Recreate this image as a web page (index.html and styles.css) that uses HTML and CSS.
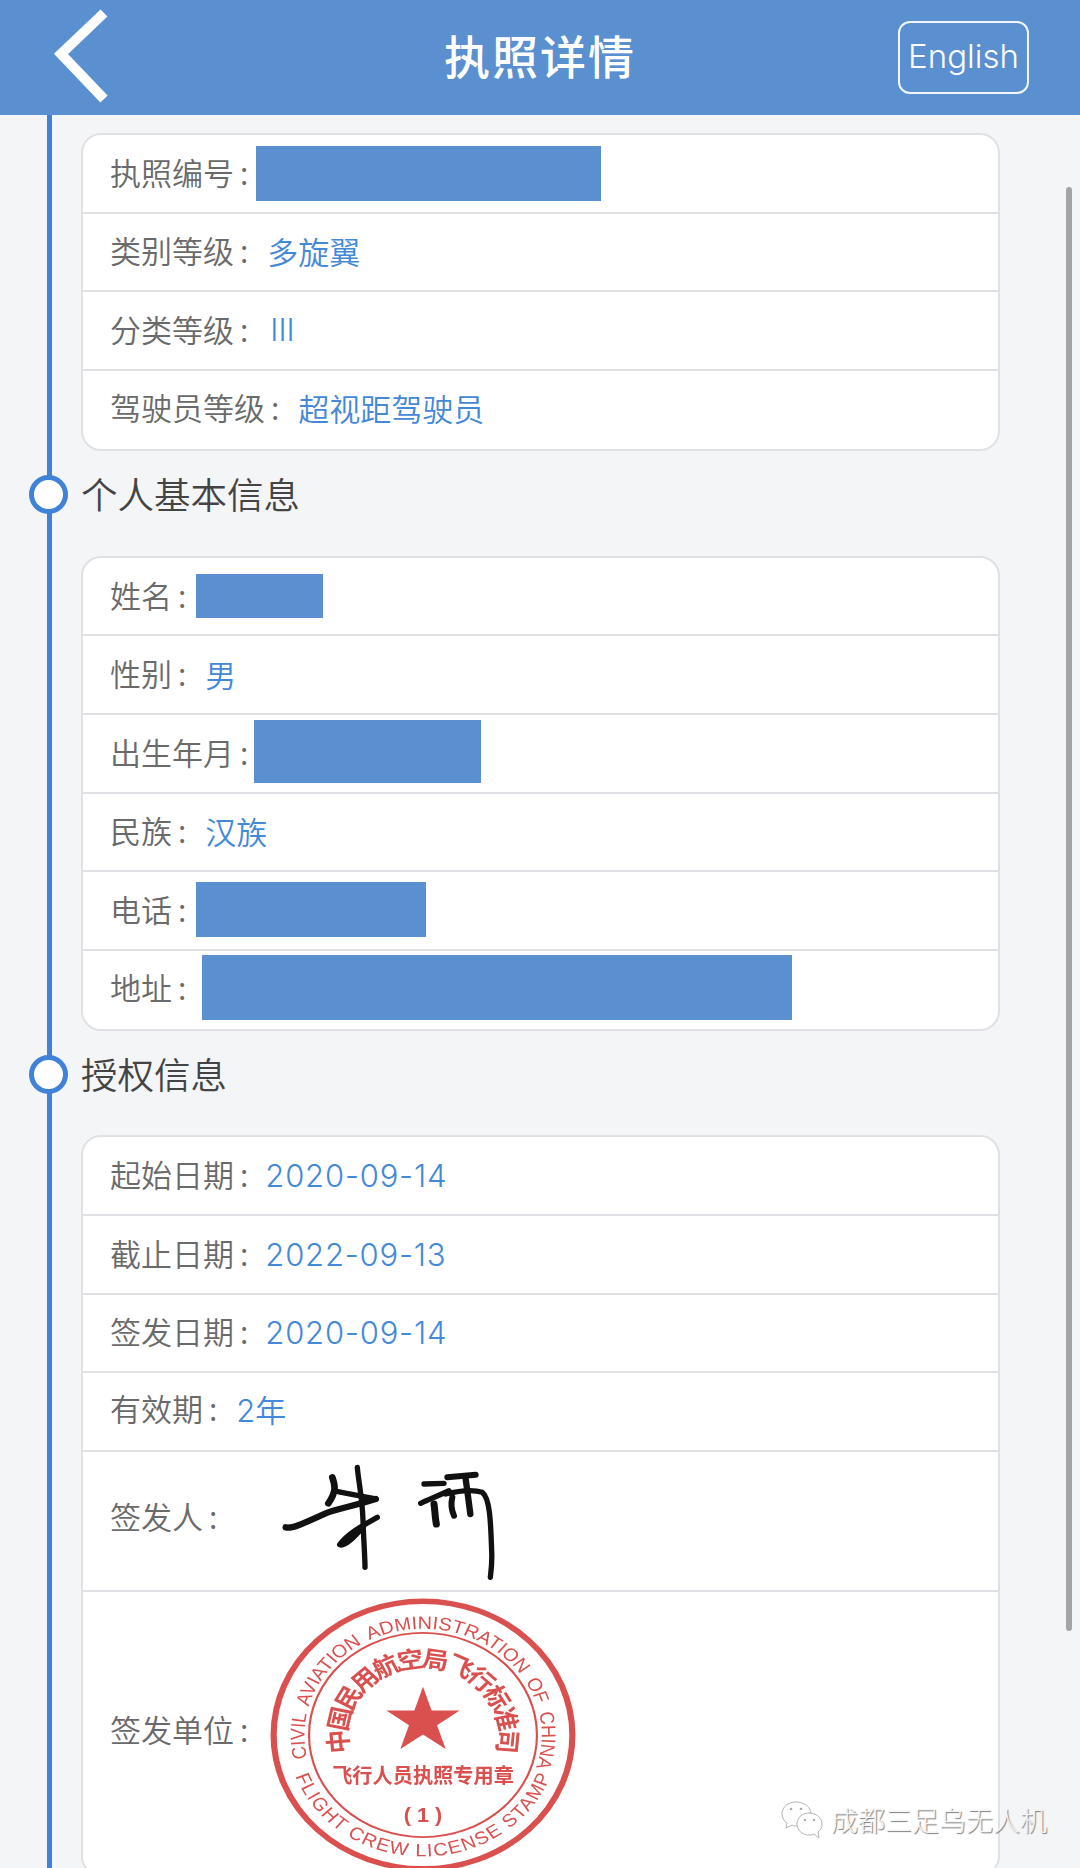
FILE: index.html
```html
<!DOCTYPE html>
<html lang="zh-CN">
<head>
<meta charset="utf-8">
<title>执照详情</title>
<link rel="stylesheet" href="styles.css">
</head>
<body>
<div class="page">
  <header class="header">
    <div class="header-left">
      <svg class="back" viewBox="0 0 60 100" aria-hidden="true"><polyline points="51,5 8,46 51,91" fill="none" stroke="#fff" stroke-width="10"/></svg>
    </div>
    <h1 class="title">执照详情</h1>
    <div class="header-right"><span class="lang">English</span></div>
  </header>
  <main class="content">
    <div class="timeline">
      <section class="card">
        <div class="row"><span class="label">执照编号<i class="colon">:</i></span><span class="mask mask-license"></span></div>
        <div class="row"><span class="label">类别等级<i class="colon">:</i></span><span class="value">多旋翼</span></div>
        <div class="row"><span class="label">分类等级<i class="colon">:</i></span><span class="value value-roman">III</span></div>
        <div class="row row-up"><span class="label">驾驶员等级<i class="colon">:</i></span><span class="value">超视距驾驶员</span></div>
      </section>
      <h2 class="heading"><span class="dot"></span><span class="heading-text">个人基本信息</span></h2>
      <section class="card">
        <div class="row"><span class="label">姓名<i class="colon">:</i></span><span class="mask mask-name"></span></div>
        <div class="row"><span class="label">性别<i class="colon">:</i></span><span class="value">男</span></div>
        <div class="row"><span class="label">出生年月<i class="colon">:</i></span><span class="mask mask-birth"></span></div>
        <div class="row"><span class="label">民族<i class="colon">:</i></span><span class="value">汉族</span></div>
        <div class="row"><span class="label">电话<i class="colon">:</i></span><span class="mask mask-phone"></span></div>
        <div class="row row-short row-up"><span class="label">地址<i class="colon">:</i></span><span class="mask mask-address"></span></div>
      </section>
      <h2 class="heading"><span class="dot"></span><span class="heading-text">授权信息</span></h2>
      <section class="card">
        <div class="row"><span class="label">起始日期<i class="colon">:</i></span><span class="value value-date">2020-09-14</span></div>
        <div class="row"><span class="label">截止日期<i class="colon">:</i></span><span class="value value-date">2022-09-13</span></div>
        <div class="row"><span class="label">签发日期<i class="colon">:</i></span><span class="value value-date">2020-09-14</span></div>
        <div class="row row-up"><span class="label">有效期<i class="colon">:</i></span><span class="value">2年</span></div>
        <div class="row row-sign">
          <span class="label label-tall">签发人<i class="colon">:</i></span>
          <svg class="signature" viewBox="0 0 720 390" aria-hidden="true">
            <g fill="none" stroke="#111" stroke-linecap="round" stroke-linejoin="round">
              <path d="M50 220 C70 225 110 205 170 178 C200 165 240 160 320 135" stroke-width="19"/>
              <path d="M190 70 C197 90 205 110 178 148" stroke-width="20"/>
              <path d="M203 112 C230 118 270 125 322 135" stroke-width="16"/>
              <path d="M265 40 C268 80 280 130 282 200 C284 260 288 310 288 340" stroke-width="16"/>
              <path d="M325 190 C290 210 240 235 212 272 C230 280 265 240 285 215" stroke-width="16"/>
              <path d="M465 90 L525 88" stroke-width="16"/>
              <path d="M455 148 C480 135 510 125 540 110" stroke-width="16"/>
              <path d="M495 150 C498 170 498 190 502 210" stroke-width="21"/>
              <path d="M535 70 L620 62" stroke-width="18"/>
              <path d="M590 75 C595 110 600 150 604 180" stroke-width="19"/>
              <path d="M550 130 C545 150 548 170 555 185" stroke-width="18"/>
              <path d="M530 120 C570 110 610 105 640 115 C665 135 665 220 668 290 C670 330 665 360 664 370" stroke-width="16"/>
            </g>
          </svg>
        </div>
        <div class="row row-stamp">
          <span class="label label-tall">签发单位<i class="colon">:</i></span>
          <svg class="stamp" viewBox="0 0 200 200" preserveAspectRatio="none" aria-hidden="true">
            <defs>
              <path id="arc-top" d="M100 177 A77 77 0 1 1 100.1 177" />
              <path id="arc-bottom" d="M12 100 A88 88 0 0 0 188 100" />
            </defs>
            <g fill="none" stroke="#d9504f">
              <circle cx="100" cy="100" r="97" stroke-width="4"/>
              <circle cx="100" cy="100" r="74" stroke-width="1.4"/>
            </g>
            <g class="stamp-text">
              <text class="stamp-en stamp-en-top"><textPath href="#arc-top" startOffset="21.5%">CIVIL AVIATION ADMINISTRATION OF CHINA</textPath></text>
              <text class="stamp-en stamp-en-bottom"><textPath href="#arc-bottom" startOffset="11%">FLIGHT CREW LICENSE STAMP</textPath></text>
              <g class="stamp-cn">
                <text class="ch-1" x="100" y="51" text-anchor="middle">中</text>
                <text class="ch-2" x="100" y="51" text-anchor="middle">国</text>
                <text class="ch-3" x="100" y="51" text-anchor="middle">民</text>
                <text class="ch-4" x="100" y="51" text-anchor="middle">用</text>
                <text class="ch-5" x="100" y="51" text-anchor="middle">航</text>
                <text class="ch-6" x="100" y="51" text-anchor="middle">空</text>
                <text class="ch-7" x="100" y="51" text-anchor="middle">局</text>
                <text class="ch-8" x="100" y="51" text-anchor="middle">飞</text>
                <text class="ch-9" x="100" y="51" text-anchor="middle">行</text>
                <text class="ch-10" x="100" y="51" text-anchor="middle">标</text>
                <text class="ch-11" x="100" y="51" text-anchor="middle">准</text>
                <text class="ch-12" x="100" y="51" text-anchor="middle">司</text>
              </g>
              <polygon points="100,65 105.6,82.3 123.8,82.3 109.1,93 114.7,110.2 100,99.6 85.3,110.2 90.9,93 76.2,82.3 94.4,82.3"/>
              <text class="stamp-line" x="100" y="135" text-anchor="middle" textLength="118" lengthAdjust="spacingAndGlyphs">飞行人员执照专用章</text>
              <text class="stamp-num" x="100" y="163" text-anchor="middle">( 1 )</text>
            </g>
          </svg>
        </div>
      </section>
    </div>
  </main>
  <div class="scrollbar"></div>
  <div class="watermark">
    <svg class="wechat" viewBox="0 0 42 38" aria-hidden="true">
      <g fill="#fff" stroke="#b5b5b5" stroke-width="1">
        <path d="M15 1 C7 1 1 6 1 13 C1 17 3 20 6 22 L5 27 L11 24 C13 25 15 25 17 25 C25 25 30 19 30 13 C30 6 23 1 15 1Z"/>
        <path d="M28 12 C21 12 16 17 16 23 C16 29 21 34 28 34 C30 34 31 34 33 33 L38 37 L37 31 C40 29 41 26 41 23 C41 17 35 12 28 12Z"/>
      </g>
      <g fill="#aaa"><circle cx="10" cy="8" r="1.3"/><circle cx="20" cy="8" r="1.3"/><circle cx="24" cy="19" r="1.2"/><circle cx="33" cy="19" r="1.2"/></g>
    </svg>
    <span class="watermark-text">成都三足乌无人机</span>
  </div>
</div>
</body>
</html>
```
FILE: styles.css
```css
* { box-sizing: border-box; }
html, body { margin: 0; padding: 0; }
body {
  width: 1080px;
  height: 1868px;
  overflow: hidden;
  font-family: "Noto Sans CJK SC", "Inter", sans-serif;
  background: #f4f5f7;
}
.page { position: relative; width: 1080px; height: 1868px; overflow: hidden; }

.header {
  height: 115px;
  background: #5a90d0;
  display: grid;
  grid-template-columns: 1fr auto 1fr;
  align-items: center;
}
.header-left { padding-left: 53px; display: flex; align-items: center; }
.back { width: 60px; height: 100px; display: block; }
.title {
  margin: 0 0 8px;
  font-size: 46px;
  font-weight: 500;
  color: #fff;
  line-height: 1;
  letter-spacing: 2px;
}
.header-right { display: flex; justify-content: flex-end; padding-right: 51px; }
.lang {
  width: 131px;
  height: 73px;
  border: 2px solid rgba(255, 255, 255, 0.92);
  border-radius: 12px;
  display: flex;
  align-items: center;
  justify-content: center;
  padding-bottom: 4px;
  color: #fff;
  font-family: "Inter", sans-serif;
  font-size: 33px;
  font-weight: 300;
}

.content { padding-left: 47px; }
.timeline {
  width: 960px;
  border-left: 5px solid #3f82d8;
  padding: 18px 0 0 29px;
  min-height: 1800px;
}
.card {
  width: 919px;
  background: #fff;
  border: 2px solid #e0e1e4;
  border-radius: 20px;
  overflow: hidden;
}
.row {
  height: 78.6px;
  border-bottom: 2px solid #e0e1e4;
  padding-left: 27px;
  display: flex;
  align-items: center;
  font-size: 31px;
}
.row:last-child { border-bottom: 0; }
.row-up { padding-bottom: 3px; }
.row-short { height: 78px; }
.row-sign { height: 140.5px; }
.row-stamp { height: 282px; }
.label { color: #6a6a6a; font-weight: 350; white-space: nowrap; margin-bottom: 4px; }
.label-tall { margin-bottom: 10px; }
.colon { font-style: normal; margin-left: 6px; }
.value {
  font-family: "Inter", "Noto Sans CJK SC", sans-serif;
  color: #4488d8;
  font-weight: 350;
  margin: 0 0 2px 19px;
  white-space: nowrap;
}
.value-roman { margin-left: 22px; font-weight: 300; }
.value-date { margin: 0 0 0 17px; letter-spacing: 0.8px; }

.mask { display: block; background: #5a90d0; flex: none; }
.mask-license { width: 345px; height: 55px; margin-left: 7.5px; }
.mask-name { width: 127px; height: 44px; margin-left: 9.7px; }
.mask-birth { width: 227px; height: 63px; margin: 0 0 4px 6px; }
.mask-phone { width: 230px; height: 55px; margin: 0 0 2px 9.7px; }
.mask-address { width: 590px; height: 65px; margin: 0 0 2px 16px; }

.heading {
  margin: 24px 0 41.5px -52px;
  height: 39px;
  display: flex;
  align-items: center;
  gap: 13px;
  font-size: 36.5px;
  font-weight: 350;
  color: #444;
  line-height: 1;
}
.heading-text { margin-bottom: 1px; }
.dot {
  width: 39px;
  height: 39px;
  border-radius: 50%;
  border: 5px solid #3f82d8;
  background: #fff;
  flex: none;
}

.signature { width: 240px; height: 130px; margin: 0 0 4px 52px; flex: none; filter: blur(0.5px); }
.stamp {
  width: 308px;
  height: 276px;
  margin: 5px 0 0 21px;
  flex: none;
  align-self: flex-start;
  filter: blur(0.4px);
}
.stamp-text { fill: #d9504f; }
.stamp-en { font-family: "Liberation Sans", sans-serif; font-size: 13px; }
.stamp-en-top { word-spacing: 2.5px; }
.stamp-en-bottom { letter-spacing: 0.8px; }
.stamp-cn { font-size: 17px; font-weight: 700; }
.stamp-line { font-size: 15px; font-weight: 700; }
.stamp-num { font-family: "Liberation Sans", sans-serif; font-size: 14px; font-weight: 700; }
.stamp-cn text { transform-origin: 100px 100px; }
.ch-1 { transform: rotate(-95deg); }
.ch-2 { transform: rotate(-77.7deg); }
.ch-3 { transform: rotate(-60.5deg); }
.ch-4 { transform: rotate(-43.2deg); }
.ch-5 { transform: rotate(-25.9deg); }
.ch-6 { transform: rotate(-8.6deg); }
.ch-7 { transform: rotate(8.6deg); }
.ch-8 { transform: rotate(25.9deg); }
.ch-9 { transform: rotate(43.2deg); }
.ch-10 { transform: rotate(60.5deg); }
.ch-11 { transform: rotate(77.7deg); }
.ch-12 { transform: rotate(95deg); }

.scrollbar {
  position: absolute;
  left: 1066px;
  top: 187px;
  width: 6px;
  height: 1444px;
  border-radius: 3px;
  background: #a3a4a6;
}
.watermark {
  position: absolute;
  left: 781px;
  top: 1801px;
  display: flex;
  align-items: center;
  gap: 8px;
}
.wechat { width: 42px; height: 38px; flex: none; }
.watermark-text {
  font-size: 27px;
  font-weight: 300;
  color: #f6f6f6;
  text-shadow: 1px 1px 1px #777;
  white-space: nowrap;
  line-height: 38px;
}
```
